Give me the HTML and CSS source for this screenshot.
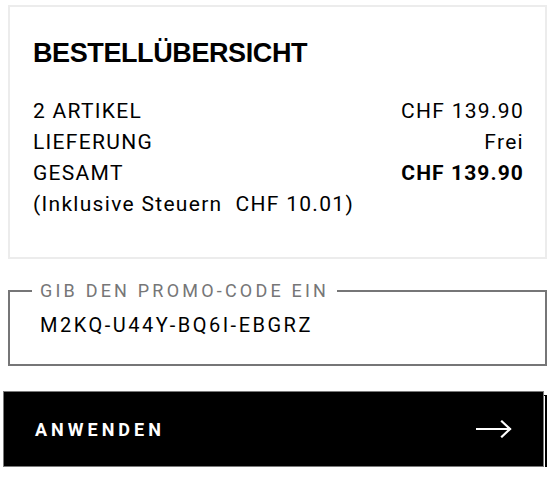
FILE: index.html
```html
<!DOCTYPE html>
<html lang="de">
<head>
<meta charset="utf-8">
<title>Bestellübersicht</title>
<link rel="stylesheet" href="styles.css">
</head>
<body>
<div class="page">
  <section class="summary">
    <h2 class="summary-title">BESTELLÜBERSICHT</h2>
    <div class="rows">
      <span class="label">2 ARTIKEL</span><span class="value">CHF 139.90</span>
      <span class="label">LIEFERUNG</span><span class="value">Frei</span>
      <span class="label">GESAMT</span><span class="value total">CHF 139.90</span>
      <span class="tax">(Inklusive Steuern&nbsp; CHF 10.01)</span>
    </div>
  </section>

  <fieldset class="promo">
    <legend class="promo-label">GIB DEN PROMO-CODE EIN</legend>
    <div class="promo-value">M2KQ-U44Y-BQ6I-EBGRZ</div>
  </fieldset>

  <div class="apply-wrap">
    <button class="apply" type="button">
      <span class="apply-text">ANWENDEN</span>
      <svg class="arrow" width="36" height="18" viewBox="0 0 36 18" aria-hidden="true">
        <path d="M1 9 H34 M26 1.5 L34 9 L26 16.5" fill="none" stroke="#fff" stroke-width="2.2" stroke-linecap="square"/>
      </svg>
    </button>
  </div>
</div>
</body>
</html>
```

FILE: styles.css
```css
* { box-sizing: border-box; }
html, body { margin: 0; padding: 0; background: #fff; }
body {
  font-family: Roboto, "DejaVu Sans", sans-serif;
  color: #000;
}
.page {
  padding: 5px 7px 0 3px;
  display: flex;
  flex-direction: column;
}
.summary {
  margin-left: 5px;
  border: 2px solid #ececec;
  padding: 30px 21px 37px 23px;
}
.summary-title {
  margin: 0 0 27px 0;
  font-family: "Liberation Sans", Arial, sans-serif;
  font-weight: 700;
  font-size: 27px;
  line-height: 32px;
  letter-spacing: -0.4px;
}
.rows {
  display: grid;
  grid-template-columns: 1fr auto;
  font-size: 21px;
  line-height: 31px;
  letter-spacing: 1.3px;
}
.value { text-align: right; }
.total { font-weight: 700; letter-spacing: 1.1px; }
.tax { grid-column: 1 / 3; }

.promo {
  margin: 21px 0 0 5px;
  border: 2px solid #767677;
  padding: 7px 20px 23px 30px;
  min-inline-size: 0;
}
.promo-label {
  margin-left: -8px;
  padding: 0 8px 0 8px;
  font-size: 18px;
  line-height: 22px;
  letter-spacing: 3.2px;
  color: #767677;
}
.promo-value {
  font-size: 20px;
  line-height: 32px;
  letter-spacing: 2.5px;
}

.apply-wrap {
  position: relative;
  isolation: isolate;
  margin-top: 25px;
  width: 541px;
}
.apply-wrap::after {
  content: "";
  position: absolute;
  top: 4px;
  left: 4px;
  right: -3px;
  bottom: -2px;
  border: 1px solid #000;
  border-right-width: 2px;
  z-index: -1;
}
.apply {
  display: flex;
  width: 541px;
  height: 76px;
  background: #000;
  border: 1px solid #7a7a7a;
  padding: 0 31px 0 31px;
  align-items: center;
  justify-content: space-between;
  cursor: pointer;
  font-family: Roboto, "DejaVu Sans", sans-serif;
}
.apply-text {
  color: #fff;
  font-weight: 700;
  font-size: 18px;
  letter-spacing: 4px;
}
.arrow { display: block; }
```
